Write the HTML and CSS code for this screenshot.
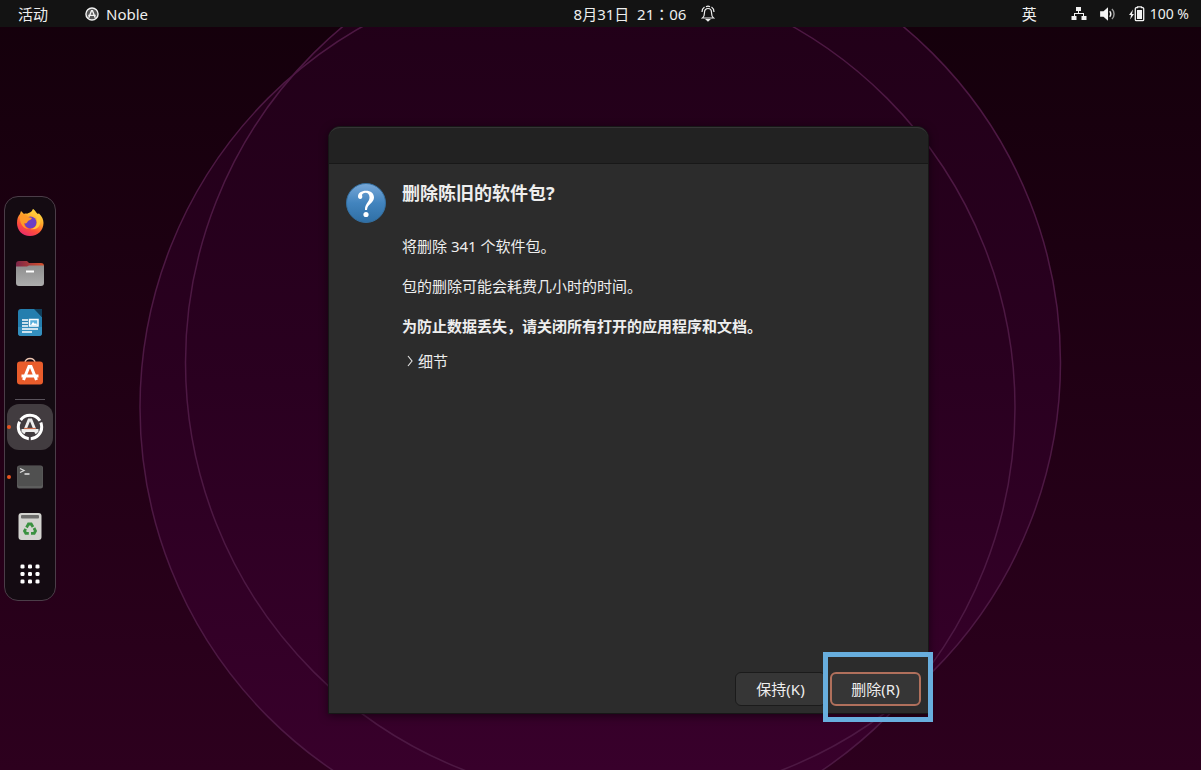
FILE: index.html
```html
<!DOCTYPE html>
<html lang="zh-CN">
<head>
  <meta charset="UTF-8">
  <title>删除陈旧的软件包?</title>
  <meta name="viewport" content="width=device-width, initial-scale=1">
  <link rel="stylesheet" href="styles.css">
</head>

<body>

  <!-- Wallpaper -->
  <svg class="wallpaper" viewBox="0 0 1201 770" preserveAspectRatio="xMidYMid slice" aria-hidden="true">
    <defs>
      <linearGradient id="disc" gradientUnits="userSpaceOnUse" x1="0" y1="0" x2="0" y2="770">
        <stop offset="0" stop-color="#210018"/>
        <stop offset="0.5" stop-color="#2a0020"/>
        <stop offset="1" stop-color="#38002b"/>
      </linearGradient>
    </defs>
    <g fill="url(#disc)">
      <circle cx="577.500" cy="407.500" r="437.500"/>
      <circle cx="623" cy="362.500" r="437.500"/>
    </g>
    <g fill="none" stroke="#4d1843" stroke-width="1.500">
      <circle cx="577.500" cy="407.500" r="437.500"/>
      <circle cx="623" cy="362.500" r="437.500"/>
    </g>
  </svg>

  <!-- Top bar -->
  <header class="topbar">
    <div class="topbar-left">
      <a href="#activities">活动</a>
      <a href="#noble" class="app-menu">
        <svg width="14" height="14" viewBox="0 0 30 30">
          <circle cx="15" cy="15" r="13" fill="#555" stroke="#f2f2f2" stroke-width="3"/>
          <path d="M8 23 14 8h2l6 15M7 18h16" fill="none" stroke="#f2f2f2" stroke-width="3"/>
        </svg>
        Noble
      </a>
    </div>
    <div class="topbar-clock">
      <time lang="zh-TW">8月31日&nbsp; 21：06</time>
      <svg width="14" height="18" viewBox="0 0 14 18" fill="none" stroke="#eee" stroke-width="1.200">
        <path d="M1.500 13c2-1.500 2-2.500 2-5.500C3.500 5 5 3.500 7 3.500S10.500 5 10.500 7.500c0 3 0 4 2 5.500z"/>
        <path d="M1 7c0-2.500 1-4 2.500-5M13 7c0-2.500-1-4-2.500-5M5 1.800c1-.6 3-.6 4 0"/>
        <path d="M5.500 14.500h3L7 16z" fill="#eee"/>
      </svg>
    </div>
    <div class="topbar-status">
      <a href="#input" class="input-source">英</a>
      <svg width="16" height="16" viewBox="0 0 16 16" fill="#f2f2f2">
        <path d="M5 1h5v4H8v2h5v3h2.500v4h-5v-4H12V8H4v2h1.500v4h-5v-4H3V7h4V5H5z"/>
      </svg>
      <svg width="18" height="18" viewBox="0 0 16 16">
        <path d="M1 5.500h3L8 2v12l-4-3.500H1z" fill="#f2f2f2"/>
        <path d="M9.500 5.500c1.300 1.300 1.300 3.700 0 5" fill="none" stroke="#eee" stroke-width="1.300"/>
        <path d="M11.500 3.500c2.500 2.300 2.500 6.700 0 9" fill="none" stroke="#999" stroke-width="1.300"/>
      </svg>
      <span class="battery">
        <svg width="16" height="16" viewBox="0 0 16 16">
          <path d="M4 3.500 0 9h2l-.8 4.500L5 8H3z" fill="#f2f2f2"/>
          <path d="M8.500 1.700V.8h4v.9h1.200q1 0 1 1v11q0 1-1 1H7.300q-1 0-1-1v-11q0-1 1-1z" fill="none" stroke="#f2f2f2" stroke-width="1.300"/>
          <path d="M8 4h5v9H8z" fill="#f2f2f2"/>
        </svg>
        100 %
      </span>
    </div>
  </header>

  <main class="desktop">

    <!-- Dock -->
    <nav class="dock" aria-label="Dock">
      <a href="#firefox" aria-label="Firefox">
        <svg width="30" height="30" viewBox="0 0 30 30">
          <defs>
            <linearGradient id="fox" x1="0.8" y1="0" x2="0.3" y2="1">
              <stop offset="0" stop-color="#fff04a"/>
              <stop offset="0.400" stop-color="#ffa52a"/>
              <stop offset="0.700" stop-color="#ff5038"/>
              <stop offset="1" stop-color="#e92a6c"/>
            </linearGradient>
          </defs>
          <path d="M18 2c2 1 3 3 4 5l2-.5c3 3 4.500 6 4.500 9.500C28.500 23 23 29 15 29S2 23 2 16c0-4 1-7 3-9l1-3 3 3c1-.5 2-.6 3-.3C14 6 17 5 18 2z" fill="url(#fox)"/>
          <circle cx="15.500" cy="15.500" r="6" fill="#6b3fc4"/>
          <path d="M5 8c4-2 7 0 8 2l4 1c-1 2-3 2-4 3-1 2-2 3-4 2 0 3 2 5 5 6-6 0-10-6-9-14z" fill="#ff9a28"/>
          <path d="M18 2c-2 5 5 6 4 13 0 4-3 7-7 7 8 2 13-5 9-13-1-3-5-4-6-7z" fill="#ffc83a"/>
        </svg>
      </a>
      <a href="#files" aria-label="Files">
        <svg width="30" height="30" viewBox="0 0 30 30">
          <defs>
            <linearGradient id="tab">
              <stop offset="0" stop-color="#7c2548"/>
              <stop offset="1" stop-color="#d7512c"/>
            </linearGradient>
            <linearGradient id="drawer" x2="0" y2="1">
              <stop offset="0" stop-color="#8e8e8e"/>
              <stop offset="1" stop-color="#adadad"/>
            </linearGradient>
          </defs>
          <path d="M1 7q0-3 3-3h8l2 2h12q3 0 3 3v6H1z" fill="url(#tab)"/>
          <path d="M1 9.500h11l2-1h15V26q0 3-3 3H4q-3 0-3-3z" fill="url(#drawer)"/>
          <path d="M11 14.500h8" fill="none" stroke="#fff" stroke-width="2"/>
        </svg>
      </a>
      <a href="#writer" aria-label="LibreOffice Writer">
        <svg width="30" height="30" viewBox="0 0 30 30">
          <path d="M6 2h14l7 8v16q0 3-3 3H6q-3 0-3-3V5q0-3 3-3z" fill="#247eae"/>
          <path d="M3 20h24v6q0 3-3 3H6q-3 0-3-3z" fill="#348fbe"/>
          <path d="M19 2h8v8z" fill="#103f5b"/>
          <path d="M7 13h6M7 16h6M7 19h6M7 22h16M7 25h10" stroke="#fff" stroke-width="1.300"/>
          <path d="M14.500 12.500h8.500v6.500h-8.500z" fill="#5ab0dc" stroke="#fff" stroke-width="1.500"/>
          <path d="m16 18 2-3 2 2 1-1 1 2z" fill="#fff"/>
        </svg>
      </a>
      <a href="#software" aria-label="Ubuntu Software">
        <svg width="30" height="30" viewBox="0 0 30 30">
          <path d="M10 6c0-6 10-6 10 0" fill="none" stroke="#edc5b1" stroke-width="1.500"/>
          <rect x="2" y="4.500" width="26" height="23" rx="3" fill="#e95c2b"/>
          <path d="M8.500 23 14 9.500h2L21.500 23M6.500 19h17" fill="none" stroke="#fff" stroke-width="3"/>
        </svg>
      </a>
      <hr>
      <a href="#updater" class="running active" aria-label="Noble">
        <svg width="30" height="30" viewBox="0 0 30 30">
          <circle cx="15" cy="15" r="11.700" fill="none" stroke="#fff" stroke-width="3" stroke-dasharray="22.500 2" stroke-dashoffset="5"/>
          <path d="M8.500 21.500 14 8h2l5.500 13.500M6.500 18.500h17" fill="none" stroke="#eee" stroke-width="2.800"/>
          <path d="M9 16.500h12" stroke="#c96a4a" stroke-width="1.200"/>
        </svg>
      </a>
      <a href="#terminal" class="running" aria-label="Terminal">
        <svg width="30" height="30" viewBox="0 0 30 30">
          <rect x="2" y="3.500" width="26" height="23" rx="2.500" fill="#5e5e5e"/>
          <rect x="2.500" y="4" width="25" height="20" rx="2" fill="#505050"/>
          <path d="m5 6.500 4 2-4 2" fill="none" stroke="#ddd" stroke-width="1.300"/>
          <path d="M9.500 12h5" stroke="#fff" stroke-width="1.300"/>
        </svg>
      </a>
      <a href="#trash" aria-label="Trash">
        <svg width="30" height="30" viewBox="0 0 30 30">
          <rect x="3.500" y="1" width="23" height="27" rx="3" fill="#d4d4d0"/>
          <rect x="6" y="3" width="18" height="3.500" rx="1" fill="#6e6e6c"/>
          <g fill="none" stroke="#3a9140" stroke-width="2.800">
            <path d="m11.500 15.500 2-3.500h2.700l1.800 3"/>
            <path d="m19 16 1.500 3-1.300 2.300H16"/>
            <path d="M13.800 21.300h-3L9.500 19l1.200-2.200"/>
          </g>
        </svg>
      </a>
      <a href="#apps" class="show-apps" aria-label="Show Applications">
        <svg width="30" height="30" viewBox="0 0 30 30" fill="#fff">
          <g id="dots">
            <rect x="5.500" y="4.500" width="4" height="4" rx="1.300"/>
            <rect x="13" y="4.500" width="4" height="4" rx="1.300"/>
            <rect x="20.500" y="4.500" width="4" height="4" rx="1.300"/>
          </g>
          <use href="#dots" y="7.500"/>
          <use href="#dots" y="15"/>
        </svg>
      </a>
    </nav>

    <!-- Dialog -->
    <div class="stage">
      <section class="dialog" role="dialog" aria-labelledby="dialog-title">
        <div class="titlebar"></div>
        <div class="dialog-body">
          <svg class="question" width="40" height="40" viewBox="0 0 40 40" aria-hidden="true">
            <defs>
              <linearGradient id="ball" x2="0" y2="1">
                <stop offset="0" stop-color="#78a8d8"/>
                <stop offset="0.500" stop-color="#4284be"/>
                <stop offset="1" stop-color="#2f6fa5"/>
              </linearGradient>
            </defs>
            <circle cx="20" cy="20" r="19.500" fill="url(#ball)" stroke="#356f9f"/>
            <path d="M12 13.500C12 10 15.500 7.800 19.800 7.800c5 0 8.200 2.600 8.200 6.700 0 5.500-6.500 6-7 12.500h-2c-.3-6.500 4.500-8 4.500-12.500 0-3-1.500-4.800-4-4.800-2 0-3.300 1-3.500 2.300 1 2.500-.3 4-1.800 4-1.300 0-2.200-1-2.200-2.500z" fill="#fff"/>
            <circle cx="20" cy="31.500" r="2.600" fill="#fff"/>
          </svg>
          <div class="message">
            <h1 id="dialog-title">删除陈旧的软件包?</h1>
            <p>将删除 341 个软件包。</p>
            <p>包的删除可能会耗费几小时的时间。</p>
            <p><strong>为防止数据丢失，请关闭所有打开的应用程序和文档。</strong></p>
            <details>
              <summary>
                <svg width="6" height="12" viewBox="0 0 6 12" fill="none" stroke="#ddd" stroke-width="1.200">
                  <path d="m1 1 4 5-4 5"/>
                </svg>
                细节
              </summary>
            </details>
          </div>
        </div>
        <div class="actions">
          <button type="button">保持(K)</button>
          <div class="callout">
            <button type="button" class="default">删除(R)</button>
          </div>
        </div>
      </section>
    </div>

  </main>

</body>
</html>
```

FILE: styles.css
```css
* {
  box-sizing: border-box;
}

body {
  margin: 0;
  min-height: 100vh;
  display: flex;
  flex-direction: column;
  font-family: 'Noto Sans', 'Noto Sans CJK SC', sans-serif;
  font-size: 15px;
  line-height: 20px;
  color: #eee;
  background: linear-gradient(#14000b, #2d001e);
}

a {
  color: inherit;
  text-decoration: none;
}

svg {
  display: block;
  flex-shrink: 0;
}

.wallpaper {
  position: absolute;
  inset: 0;
  width: 100%;
  height: 100%;
  z-index: -1;
}

/* Top bar */
.topbar {
  display: grid;
  grid-template-columns: 1fr auto 1fr;
  align-items: center;
  height: 27px;
  padding: 0 12px 0 18px;
  background: #131313;
}

.topbar-left,
.topbar-clock,
.topbar-status,
.app-menu,
.battery {
  display: flex;
  align-items: center;
}

.topbar-left {
  gap: 37px;
}

.app-menu {
  gap: 7px;
}

.topbar-clock {
  gap: 15px;
  padding-left: 82px;
}

/* this face centres the full-width colon */
.topbar-clock time {
  font-family: 'Noto Sans', 'Noto Sans CJK TC', sans-serif;
}

.topbar-status {
  justify-content: flex-end;
  gap: 12px;
}

.input-source {
  margin-right: 22px;
}

.battery {
  gap: 5px;
  font-size: 14px;
}

/* Dock */
.desktop {
  flex: 1;
  display: flex;
  align-items: center;
}

.dock {
  display: flex;
  flex-direction: column;
  align-items: center;
  gap: 4px;
  margin-left: 4px;
  padding: 2px 2px 4px;
  background: #140b12;
  border: 1px solid #4b3d48;
  border-radius: 14px;
}

.dock a {
  position: relative;
  display: flex;
  align-items: center;
  justify-content: center;
  width: 46px;
  height: 46px;
  border-radius: 12px;
}

.dock hr {
  width: 30px;
  height: 1px;
  margin: 0;
  border: 0;
  background: #5a535c;
}

.dock .active {
  background: #423c40;
}

.dock .running::before {
  content: '';
  position: absolute;
  left: 0;
  width: 4px;
  height: 4px;
  border-radius: 50%;
  background: #e95420;
}

.dock .show-apps {
  height: 42px;
}

/* Dialog */
.stage {
  flex: 1;
  display: flex;
  justify-content: center;
  padding-top: 43px;
}

.dialog {
  display: flex;
  flex-direction: column;
  width: 100%;
  max-width: 601px;
  min-height: 588px;
  background: #2c2c2c;
  border: 1px solid #171717;
  border-radius: 12px 12px 0 0;
  box-shadow: 0 2px 8px rgba(0, 0, 0, 0.5);
}

.titlebar {
  height: 37px;
  background: #222;
  border-top: 1px solid #353535;
  border-bottom: 1px solid #181818;
  border-radius: 11px 11px 0 0;
}

.dialog-body {
  flex: 1;
  display: flex;
  align-items: flex-start;
  gap: 16px;
  padding: 19px 17px;
}

.message h1 {
  margin: 0 0 33px;
  font-size: 18px;
  line-height: 20px;
}

.message p {
  margin: 0 0 20px;
}

.message details {
  margin-top: -5px;
}

.message summary {
  display: flex;
  align-items: center;
  gap: 5px;
  padding-left: 5px;
  cursor: pointer;
}

.actions {
  display: flex;
  justify-content: flex-end;
  gap: 4px;
  padding: 0 7px 7px;
}

.actions button {
  display: block;
  width: 91px;
  height: 34px;
  padding: 0;
  font: inherit;
  color: #eee;
  background: #363636;
  border: 1px solid #1b1b1b;
  border-radius: 6px;
}

.actions .default {
  border: 2px solid #b0705c;
}

/* Blue frame around the button to press */
.callout {
  position: relative;
}

.callout::after {
  content: '';
  position: absolute;
  inset: -20px -12px -16px -7px;
  border: 5px solid #68aede;
  pointer-events: none;
}
```
